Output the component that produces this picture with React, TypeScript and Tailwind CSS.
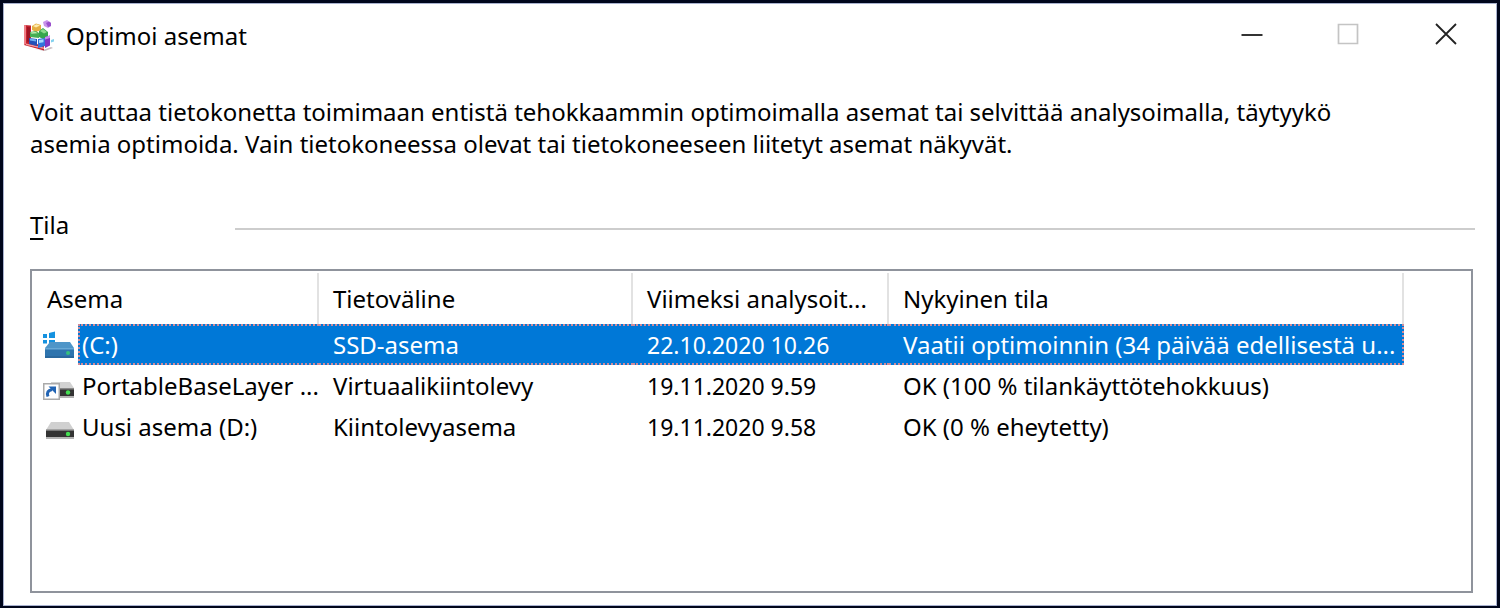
import { useState } from "react";
import { clsx } from "clsx";

type DriveKind = "system" | "virtual" | "disk";

interface Drive {
  name: string;
  kind: DriveKind;
  media: string;
  analyzed: string;
  status: string;
}

const drives: Drive[] = [
  {
    name: "(C:)",
    kind: "system",
    media: "SSD-asema",
    analyzed: "22.10.2020 10.26",
    status: "Vaatii optimoinnin (34 päivää edellisestä u...",
  },
  {
    name: "PortableBaseLayer ...",
    kind: "virtual",
    media: "Virtuaalikiintolevy",
    analyzed: "19.11.2020 9.59",
    status: "OK (100 % tilankäyttötehokkuus)",
  },
  {
    name: "Uusi asema (D:)",
    kind: "disk",
    media: "Kiintolevyasema",
    analyzed: "19.11.2020 9.58",
    status: "OK (0 % eheytetty)",
  },
];

const AppIcon = () => (
  <svg className="h-8 w-8" viewBox="0 0 32 32" aria-hidden="true">
    <path d="M12 29l9 1 8-3 2 1-8 3z" fill="#c9bcc0" />
    <path d="M2 5l7 .5V23l13 2.500v5L2 25z" fill="#c4202e" />
    <path d="M2 5l2 .3V24l-2 1z" fill="#ef7f86" />
    <path d="M5 7l3 .3V22l-3-.5z" fill="#9e1424" />
    <path d="M4 23.500l18 4v1.500L4 25z" fill="#f39a9c" />
    <path d="M10 6l4-2.500L19 5v5l-5 2-4-2z" fill="#e5ae42" />
    <path d="M11 6l3.500-1.800L18 5.500 14 7.500z" fill="#fdecae" />
    <path d="M17 11l4-3 5 4v5l-5 2-4-2z" fill="#36a64c" />
    <path d="M18 11l3-2 4 3-3 1.500z" fill="#8edb8c" />
    <path d="M8 12l6-1 3 2v5l-9-1z" fill="#46ad52" />
    <path d="M8.500 12.500l5-.8 2 1.500-6 .6z" fill="#bcecb0" />
    <path d="M7 18l8 1v7l-8-2z" fill="#2450b8" />
    <path d="M8 18.500l6 1v2l-6-1z" fill="#6fb0f4" />
    <path d="M16 19l7-1v8l-7 2z" fill="#3272dc" />
    <path d="M17 20l4.500-.8v3L17 23z" fill="#a6dafc" />
    <path d="M23 17l5-1.500v10L23 28z" fill="#8432c2" />
    <path d="M23 17l5-1.500v2.500l-5 1.500z" fill="#c58cec" />
    <path d="M21 2l4-2 4 3v3l-3 2-4-2z" fill="#c993ea" />
    <path d="M24 3l3-1.500 2 1.500v3l-3 1z" fill="#9a50cc" />
    <path d="M29 20l3-1v2.500l-3 1z" fill="#84d2ee" />
  </svg>
);

const DriveIcon = ({ kind }: { kind: DriveKind }) => {
  if (kind === "system") {
    return (
      <svg className="block h-8 w-8" viewBox="0 0 32 32" aria-hidden="true">
        <path d="M0 5h4v4H0zM6 4l6-1.500V9H6zM0 11h4v3.500H0zM6 11h6v3.500H6z" fill="#1492e0" />
        <path d="M7 13h20l4 6H2z" fill="#4e95c8" />
        <path d="M2 19h29v10H2z" fill="#2e74ae" />
        <path d="M2 19h29v1.500H2z" fill="#68a9d6" />
        <path d="M2 27h29v2H2z" fill="#2a689e" />
        <circle cx="25" cy="24" r="2" fill="#35c07c" />
      </svg>
    );
  }
  if (kind === "virtual") {
    return (
      <svg className="block h-8 w-8" viewBox="0 0 32 32" aria-hidden="true">
        <path d="M8 12h19l4 6H8z" fill="#d2d2d2" />
        <path d="M14 18h17v8H14z" fill="#333" />
        <path d="M14 18h17v1.500H14z" fill="#888" />
        <path d="M14 26h17v2H14z" fill="#b3b3b3" />
        <circle cx="25" cy="22.500" r="2.200" fill="#44e052" />
        <path d="M.75 13.750h15.500v15.500H.75z" fill="#fff" stroke="#aaa" strokeWidth="1.500" />
        <path d="M5 26.500c-1.500-4 0-6 4-7" fill="none" stroke="#2264b4" strokeWidth="3" />
        <path d="M5.500 16.500H13V24z" fill="#2264b4" />
      </svg>
    );
  }
  return (
    <svg className="block h-8 w-8" viewBox="0 0 32 32" aria-hidden="true">
      <path d="M8 11h18l5 8H3z" fill="#d0d0d0" />
      <path d="M3 19h28v7H3z" fill="#333" />
      <path d="M3 18.500h28V20H3z" fill="#777" />
      <path d="M3 26h28v2H3z" fill="#b3b3b3" />
      <circle cx="25" cy="23" r="2.200" fill="#44e052" />
    </svg>
  );
};

const TitleBar = () => (
  <header className="flex justify-between pl-[18px]">
    <div className="flex h-16 items-center gap-3">
      <AppIcon />
      <h1>Optimoi asemat</h1>
    </div>
    <div className="flex h-15">
      <button type="button" aria-label="Pienennä" className="flex w-24 items-center justify-center">
        <svg className="h-6 w-6" viewBox="0 0 24 24" aria-hidden="true">
          <path d="M1.500 13h21" stroke="#333" strokeWidth="2" />
        </svg>
      </button>
      <button type="button" aria-label="Suurenna" disabled className="flex w-24 items-center justify-center">
        <svg className="h-6 w-6" viewBox="0 0 24 24" aria-hidden="true">
          <path d="M2.500 2.500h19v19h-19z" fill="none" stroke="#c4c4c4" strokeWidth="1.700" />
        </svg>
      </button>
      <button type="button" aria-label="Sulje" className="flex w-[100px] items-center justify-center">
        <svg className="h-6 w-6" viewBox="0 0 24 24" aria-hidden="true">
          <path d="M2 2l20 20M22 2L2 22" stroke="#222" strokeWidth="1.800" />
        </svg>
      </button>
    </div>
  </header>
);

const App = () => {
  const [selected, setSelected] = useState(0);

  return (
    <div className="flex min-h-screen flex-col border-x-3 border-t-3 border-b-2 border-[#00061c] bg-white font-['Noto_Sans','Open_Sans',sans-serif] text-2xl/8 text-black">
      <div className="flex flex-1 flex-col border border-[#a9b2cf]">
        <TitleBar />

        <main className="flex flex-1 flex-col pt-7 pr-[21px] pb-[12px] pl-[26px]">
          <p>
            Voit auttaa tietokonetta toimimaan entistä tehokkaammin optimoimalla asemat tai selvittää analysoimalla, täytyykö
            <br />
            asemia optimoida. Vain tietokoneessa olevat tai tietokoneeseen liitetyt asemat näkyvät.
          </p>

          <div className="mt-[49px] flex items-center">
            <h2 className="w-[205px]">
              <span className="underline decoration-2 underline-offset-4">T</span>ila
            </h2>
            <div className="mt-2 h-[2px] flex-1 bg-[#cdcdcd]" />
          </div>

          {/* Drive list */}
          <div className="mt-7 mr-[2px] flex-1 border-2 border-[#8f939c] pt-[2px]">
            <table className="w-[1372px] table-fixed border-separate border-spacing-0 text-left whitespace-nowrap">
              <colgroup>
                <col className="w-[46px]" />
                <col className="w-[241px]" />
                <col className="w-[314px]" />
                <col className="w-[256px]" />
                <col className="w-[515px]" />
              </colgroup>
              <thead>
                <tr className="h-[51px]">
                  <th colSpan={2} className="border-r-2 border-[#e2e2e2] pl-[15px] font-normal">Asema</th>
                  <th className="border-r-2 border-[#e2e2e2] pl-[14px] font-normal">Tietoväline</th>
                  <th className="border-r-2 border-[#e2e2e2] pl-[14px] font-normal">Viimeksi analysoit...</th>
                  <th className="border-r-2 border-[#e2e2e2] pl-[14px] font-normal">Nykyinen tila</th>
                </tr>
              </thead>
              <tbody>
                {drives.map((drive, i) => {
                  const cell = clsx(
                    "border-y-2 border-dotted",
                    i === selected ? "border-[#d08a98] bg-[#0078d7] text-white" : "border-transparent"
                  );
                  return (
                    <tr key={drive.name} className="h-[41px]" onClick={() => setSelected(i)}>
                      <td className="pl-[11px]">
                        <DriveIcon kind={drive.kind} />
                      </td>
                      <td className={clsx(cell, "border-l-2 pl-[2px]")}>{drive.name}</td>
                      <td className={clsx(cell, "pl-[14px]")}>{drive.media}</td>
                      <td className={clsx(cell, "pl-[14px] text-[23px]")}>{drive.analyzed}</td>
                      <td className={clsx(cell, "border-r-2 pl-[14px]")}>{drive.status}</td>
                    </tr>
                  );
                })}
              </tbody>
            </table>
          </div>
        </main>
      </div>
    </div>
  );
};

export default App;
